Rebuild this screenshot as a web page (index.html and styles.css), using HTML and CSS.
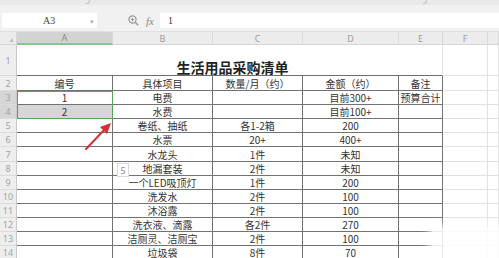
FILE: index.html
```html
<!DOCTYPE html>
<html>
<head>
<meta charset="utf-8">
<link rel="stylesheet" href="styles.css">
</head>
<body>
<div class="app">
  <div class="topstrip"><span class="tab t1"></span><span class="tab t2"></span></div>
  <div class="fbar">
    <div class="namebox"><span class="ref">A3</span><span class="dd">▾</span></div>
    <div class="ficons">
      <svg class="zoomic" width="11" height="11" viewBox="0 0 11 11"><circle cx="4.5" cy="4.5" r="3.6" fill="none" stroke="#9a9a9a" stroke-width="1.2"/><line x1="7.2" y1="7.2" x2="10.2" y2="10.2" stroke="#9a9a9a" stroke-width="1.6"/><line x1="2.8" y1="4.5" x2="6.2" y2="4.5" stroke="#9a9a9a" stroke-width="1"/><line x1="4.5" y1="2.8" x2="4.5" y2="6.2" stroke="#9a9a9a" stroke-width="1"/></svg>
      <span class="fx">fx</span>
    </div>
    <div class="finput">1</div>
  </div>
  <div class="sheet">
    <div class="corner"><span class="tri"></span></div>
    <div class="ch sel-ch">A</div><div class="ch">B</div><div class="ch">C</div><div class="ch">D</div><div class="ch">E</div><div class="ch">F</div><div class="ch last"></div>

    <div class="rh">1</div><div class="title">生活用品采购清单</div><div class="g"></div><div class="g"></div>

    <div class="rh">2</div><div class="t">编号</div><div class="t">具体项目</div><div class="t">数量/月（约）</div><div class="t">金额（约）</div><div class="t">备注</div><div class="g"></div><div class="g"></div>
    <div class="rh hl">3</div><div class="t">1</div><div class="t">电费</div><div class="t"></div><div class="t">目前300+</div><div class="t">预算合计</div><div class="g"></div><div class="g"></div>
    <div class="rh hl">4</div><div class="t sel">2</div><div class="t">水费</div><div class="t"></div><div class="t">目前100+</div><div class="t"></div><div class="g"></div><div class="g"></div>
    <div class="rh">5</div><div class="t"></div><div class="t">卷纸、抽纸</div><div class="t">各1-2箱</div><div class="t">200</div><div class="t"></div><div class="g"></div><div class="g"></div>
    <div class="rh">6</div><div class="t"></div><div class="t">水票</div><div class="t">20+</div><div class="t">400+</div><div class="t"></div><div class="g"></div><div class="g"></div>
    <div class="rh">7</div><div class="t"></div><div class="t">水龙头</div><div class="t">1件</div><div class="t">未知</div><div class="t"></div><div class="g"></div><div class="g"></div>
    <div class="rh">8</div><div class="t"></div><div class="t">地漏套装</div><div class="t">2件</div><div class="t">未知</div><div class="t"></div><div class="g"></div><div class="g"></div>
    <div class="rh">9</div><div class="t"></div><div class="t">一个LED吸顶灯</div><div class="t">1件</div><div class="t">200</div><div class="t"></div><div class="g"></div><div class="g"></div>
    <div class="rh">10</div><div class="t"></div><div class="t">洗发水</div><div class="t">2件</div><div class="t">100</div><div class="t"></div><div class="g"></div><div class="g"></div>
    <div class="rh">11</div><div class="t"></div><div class="t">沐浴露</div><div class="t">2件</div><div class="t">100</div><div class="t"></div><div class="g"></div><div class="g"></div>
    <div class="rh">12</div><div class="t"></div><div class="t">洗衣液、滴露</div><div class="t">各2件</div><div class="t">270</div><div class="t"></div><div class="g"></div><div class="g"></div>
    <div class="rh">13</div><div class="t"></div><div class="t">洁厕灵、洁厕宝</div><div class="t">2件</div><div class="t">100</div><div class="t"></div><div class="g"></div><div class="g"></div>
    <div class="rh lastrow">14</div><div class="t lastrow"></div><div class="t lastrow">垃圾袋</div><div class="t lastrow">8件</div><div class="t lastrow">70</div><div class="t lastrow"></div><div class="g"></div><div class="g"></div>
  </div>

  <div class="selection"></div>
  <div class="fillbox">5</div>
  <svg class="arrow" width="40" height="40" viewBox="0 0 40 40">
    <line x1="6" y1="31" x2="26" y2="10" stroke="#d63030" stroke-width="2" stroke-linecap="round"/>
    <polygon points="31,5 20,9 27,16" fill="#d63030"/>
  </svg>
  <div class="fade"></div>
</div>
</body>
</html>
```
FILE: styles.css
```css
html, body {
  margin: 0;
  padding: 0;
  background: #ffffff;
  overflow: hidden;
}
.app {
  position: relative;
  width: 499px;
  height: 258px;
  overflow: hidden;
  font-family: "Noto Sans CJK SC", "Noto Sans", sans-serif;
  color: #333333;
}
.topstrip {
  height: 5px;
  background: #e9e9e9;
  display: flex;
}
.tab {
  display: block;
  width: 3px;
  height: 3px;
  border-right: 1px solid #c4c4c4;
  border-bottom: 1px solid #c4c4c4;
  border-bottom-right-radius: 3px;
}
.t1 { margin-left: 86px; }
.t2 { margin-left: 333px; }
.fbar {
  height: 27px;
  box-sizing: border-box;
  background: #f1f1f1;
  display: flex;
  align-items: flex-start;
  padding: 8px 0 0 2px;
  border-bottom: 1px solid #e0e0e0;
}
.namebox {
  width: 95px;
  height: 15px;
  background: #ffffff;
  display: flex;
  align-items: center;
  position: relative;
}
.ref {
  font-family: "Liberation Serif", serif;
  font-size: 10px;
  color: #444;
  margin-left: 41px;
}
.dd {
  font-size: 7px;
  color: #aaa;
  margin-left: auto;
  margin-right: 3px;
}
.ficons {
  width: 63px;
  height: 15px;
  display: flex;
  align-items: center;
}
.zoomic { margin-left: 31px; }
.fx {
  font-family: "Liberation Serif", serif;
  font-style: italic;
  font-size: 11px;
  color: #8a8a8a;
  margin-left: 7px;
}
.finput {
  flex: 1;
  height: 15px;
  background: #ffffff;
  font-family: "Liberation Serif", serif;
  font-size: 10px;
  line-height: 15px;
  color: #333;
  padding-left: 8px;
}
.sheet {
  display: grid;
  grid-template-columns: 17px 96px 100px 90px 96px 44px 45px 11px;
  grid-template-rows: 13px 31px 15px 14px 14px 14px 14px 15px 14px 14px 14px 14px 14px 14px 14px;
}
.sheet > div {
  box-sizing: border-box;
}
.corner {
  background: #ececec;
  border-right: 1px solid #d6d6d6;
  border-bottom: 1px solid #d6d6d6;
  position: relative;
}
.tri {
  position: absolute;
  right: 3px;
  bottom: 2px;
  width: 0;
  height: 0;
  border-left: 4px solid transparent;
  border-bottom: 4px solid #bdbdbd;
}
.ch {
  background: #ececec;
  border-right: 1px solid #dadada;
  border-bottom: 1px solid #d6d6d6;
  font-family: "Noto Sans", sans-serif;
  font-size: 9px;
  color: #9c9c9c;
  display: flex;
  align-items: center;
  justify-content: center;
}
.ch.sel-ch {
  background: #d3d3d3;
  border-bottom: 2px solid #8cc48c;
  color: #8a8a8a;
}
.rh {
  background: #eeeeee;
  border-right: 1px solid #c8c8c8;
  border-bottom: 1px solid #dcdcdc;
  font-family: "Noto Sans", sans-serif;
  font-size: 9px;
  color: #a3a3a3;
  display: flex;
  align-items: center;
  justify-content: center;
}
.rh.hl { background: #d6d6d6; }
.title {
  grid-column: span 5;
  border-bottom: 1px solid #6e6e6e;
  border-right: 1px solid #e2e2e2;
  font-size: 14px;
  font-weight: bold;
  color: #222;
  display: flex;
  align-items: flex-end;
  justify-content: center;
  line-height: 16px;
  padding-left: 6px;
}
.t {
  border-right: 1px solid #727272;
  border-bottom: 1px solid #727272;
  font-size: 10px;
  line-height: 13px;
  white-space: nowrap;
  display: flex;
  align-items: center;
  justify-content: center;
  color: #333;
  overflow: hidden;
}
.t.sel { background: #d6d6d6; }
.lastrow {
  align-items: flex-start;
}
.g {
  border-right: 1px solid #e2e2e2;
  border-bottom: 1px solid #e2e2e2;
}
.selection {
  position: absolute;
  left: 17px;
  top: 91px;
  width: 96px;
  height: 28px;
  box-sizing: border-box;
  border: 1.5px solid #58a458;
}
.fillbox {
  position: absolute;
  left: 117px;
  top: 163px;
  width: 12px;
  height: 14px;
  box-sizing: border-box;
  background: #ffffff;
  border: 1px solid #dadada;
  font-family: "Noto Sans", sans-serif;
  font-size: 9px;
  color: #888;
  display: flex;
  align-items: center;
  justify-content: center;
}
.arrow {
  position: absolute;
  left: 80px;
  top: 118px;
}
.fade {
  position: absolute;
  left: 432px;
  top: 228px;
  width: 80px;
  height: 40px;
  background: rgba(255,255,255,0.85);
  box-shadow: 0 0 8px 4px rgba(255,255,255,0.8);
}
```
